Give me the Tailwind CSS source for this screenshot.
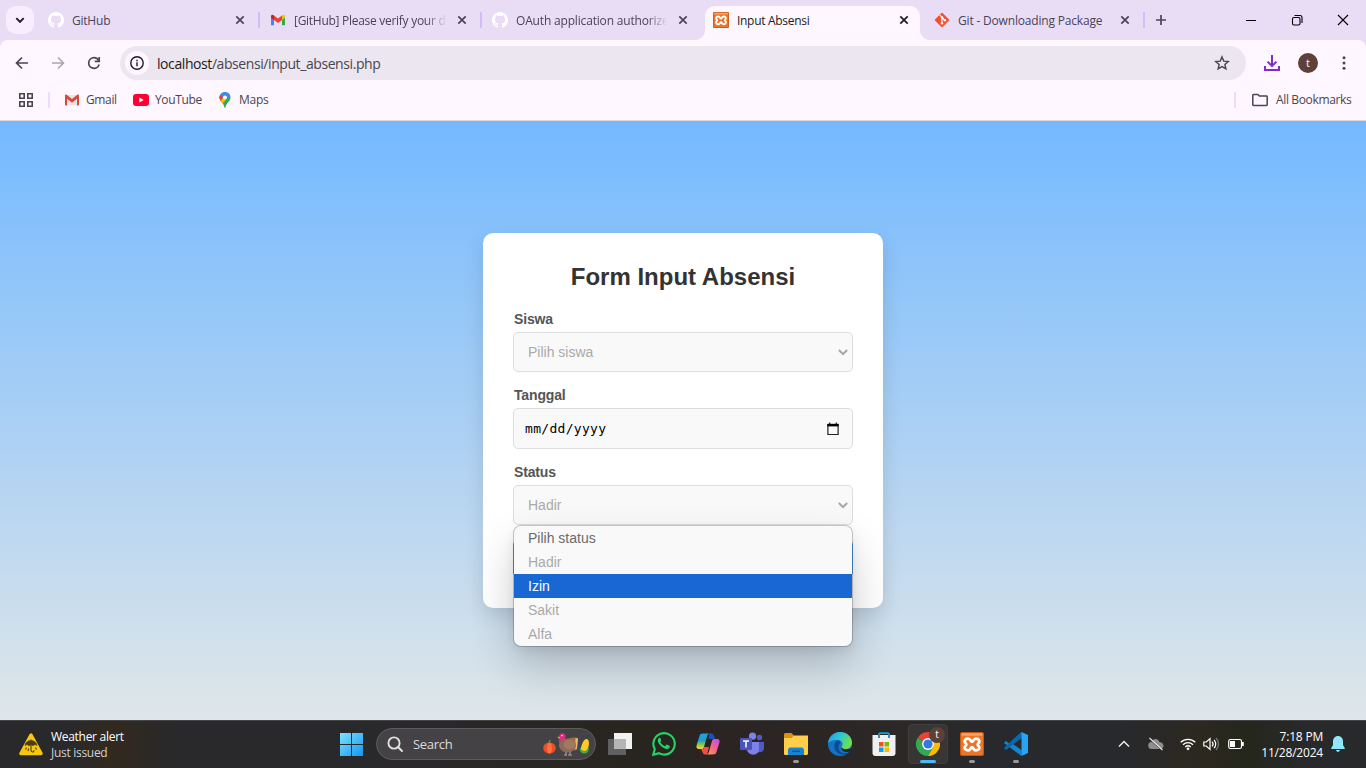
<!DOCTYPE html>
<html lang="en">
<head>
<meta charset="utf-8">
<title>Input Absensi</title>
<script src="https://cdn.jsdelivr.net/npm/@tailwindcss/browser@4"></script>
</head>
<body class="w-[1366px] h-[768px] overflow-hidden flex flex-col font-['Open_Sans',sans-serif]">
<svg class="hidden">
  <symbol id="gh" viewBox="0 0 16 16"><path fill="#fff" d="M8 0C3.58 0 0 3.58 0 8c0 3.54 2.29 6.53 5.47 7.59.4.07.55-.17.55-.38 0-.19-.01-.82-.01-1.49-2.01.37-2.53-.49-2.69-.94-.09-.23-.48-.94-.82-1.13-.28-.15-.68-.52-.01-.53.63-.01 1.08.58 1.23.82.72 1.21 1.87.87 2.33.66.07-.52.28-.87.51-1.07-1.78-.2-3.64-.89-3.64-3.95 0-.87.31-1.59.82-2.15-.08-.2-.36-1.02.08-2.12 0 0 .67-.21 2.2.82.64-.18 1.32-.27 2-.27.68 0 1.36.09 2 .27 1.53-1.04 2.2-.82 2.2-.82.44 1.1.16 1.92.08 2.12.51.56.82 1.27.82 2.15 0 3.07-1.87 3.75-3.65 3.95.29.25.54.73.54 1.48 0 1.07-.01 1.93-.01 2.2 0 .21.15.46.55.38A8.013 8.013 0 0016 8c0-4.42-3.58-8-8-8z"/></symbol>
  <symbol id="x" viewBox="0 0 16 16"><path d="M4.3 4.3l7.4 7.4M11.7 4.3l-7.4 7.4" stroke="currentColor" stroke-width="1.7" fill="none"/></symbol>
  <symbol id="xampp" viewBox="0 0 24 24"><rect width="24" height="24" rx="2" fill="#c9580f"/><rect x="1" y="1" width="22" height="22" rx="1.5" fill="#ed7527"/><rect x="1.500" y="1.200" width="21" height="2.600" rx="1" fill="#f5a26a"/><path d="M12 9.800C10.600 9.800 10.600 6.700 8.200 6.700 5.600 6.700 4.300 8.300 4.700 9.900c.3 1.200 1.600 1.300 1.600 2.600s-1.300 1.400-1.600 2.600c-.4 1.600.9 3.200 3.500 3.200 2.400 0 2.400-3.100 3.800-3.100s1.400 3.100 3.800 3.100c2.600 0 3.900-1.600 3.500-3.200-.3-1.200-1.600-1.300-1.600-2.600s1.300-1.400 1.600-2.600c.4-1.600-.9-3.200-3.500-3.200-2.400 0-2.400 3.100-3.800 3.100z" fill="none" stroke="#fff" stroke-width="2.800" stroke-linejoin="round"/></symbol>
</svg>

<!-- Tab strip -->
<header class="h-10 shrink-0 bg-[#e9ddf6] flex items-center text-[12px] text-[#4a4458] tracking-[-0.22px] [&_span]:pt-px">
  <div class="w-[38px] pl-[6px]"><div class="size-7 rounded-[10px] bg-[#f7edfe] flex items-center justify-center"><svg class="size-4" viewBox="0 0 16 16" fill="none" stroke="#1d1b20" stroke-width="1.900"><path d="M4.300 6.200L8 9.900l3.700-3.700"/></svg></div></div>
  <div class="w-[222px] h-10 flex items-center pl-[10px]">
    <svg class="size-4 mr-2"><use href="#gh"/></svg><span class="w-[149px] whitespace-nowrap">GitHub</span>
    <svg class="size-4 ml-[11px]"><use href="#x"/></svg><i class="w-[2px] h-4 bg-[#d3bcfd] ml-auto"></i>
  </div>
  <div class="w-[222px] h-10 flex items-center pl-[10px]">
    <svg class="size-4 mr-2" viewBox="0 0 16 16"><path d="M1 4v9.200h3V7.500z" fill="#4285f4"/><path d="M15 4v9.200h-3V7.500z" fill="#34a853"/><path d="M12 3.500v4.500l3-2.300V4.300c0-1.700-1.600-2.200-3-.8z" fill="#fbbc04"/><path d="M4 3.500L8 6.600l4-3.100V8l-4 3-4-3z" fill="#ea4335"/><path d="M1 4.300v1.400L4 8V3.500C2.600 2.100 1 2.700 1 4.300z" fill="#c5221f"/></svg>
    <span class="w-[151px] whitespace-nowrap tracking-[-0.280px] [mask-image:linear-gradient(to_right,#000_132px,transparent_153px)]">[GitHub] Please verify your d</span>
    <svg class="size-4 ml-[9px]"><use href="#x"/></svg><i class="w-[2px] h-4 bg-[#d3bcfd] ml-auto"></i>
  </div>
  <div class="w-[220.500px] h-10 flex items-center pl-[10px]">
    <svg class="size-4 mr-2"><use href="#gh"/></svg><span class="w-[152px] whitespace-nowrap tracking-[-0.170px] [mask-image:linear-gradient(to_right,#000_132px,transparent_151px)]">OAuth application authorize</span>
    <svg class="size-4 ml-[7px]"><use href="#x"/></svg>
  </div>
  <div class="w-[221.500px] h-10 flex items-center relative text-[#1d1b20] pl-[10.500px]">
    <div class="absolute left-[2.500px] top-[6px] w-[215px] h-[34px] rounded-t-[10px] bg-[#fef7ff]"></div>
    <div class="absolute left-[-7.500px] bottom-0 size-[10px] bg-[radial-gradient(circle_at_0_0,transparent_9.500px,#fef7ff_10.500px)]"></div>
    <div class="absolute left-[217.500px] bottom-0 size-[10px] bg-[radial-gradient(circle_at_100%_0,transparent_9.500px,#fef7ff_10.500px)]"></div>
    <svg class="size-4 mr-2 relative"><use href="#xampp"/></svg><span class="w-[149px] relative tracking-[-0.300px]">Input Absensi</span>
    <svg class="size-4 ml-[10px] relative"><use href="#x"/></svg>
  </div>
  <div class="w-[221px] h-10 flex items-center pl-[10px]">
    <svg class="size-4 mr-2" viewBox="0 0 16 16"><rect x="2.600" y="2.600" width="10.800" height="10.800" rx=".8" transform="rotate(45 8 8)" fill="#f4502f"/><path d="M5.600 2.800L8 5.200v6M8 5.500l3 3" stroke="#fff" stroke-width="1.100" fill="none"/><circle cx="8" cy="5.300" r="1.200" fill="#fff"/><circle cx="8" cy="11.300" r="1.200" fill="#fff"/><circle cx="11" cy="8.300" r="1.200" fill="#fff"/></svg>
    <span class="w-[149px] whitespace-nowrap tracking-[-0.180px]">Git - Downloading Package</span>
    <svg class="size-4 ml-[10px]"><use href="#x"/></svg><i class="w-[2px] h-4 bg-[#d3bcfd] ml-auto"></i>
  </div>
  <svg class="size-4 ml-2" viewBox="0 0 16 16" stroke="#4a4458" stroke-width="1.700"><path d="M8 3v10M3 8h10"/></svg>
  <div class="ml-auto flex items-center gap-[30px] pr-[15px] text-black">
    <svg class="size-4" viewBox="0 0 16 16" stroke="#000"><path d="M3 8.500h10"/></svg>
    <svg class="size-4" viewBox="0 0 16 16" fill="none" stroke="#000" stroke-width="1.100"><rect x="3.500" y="5.500" width="7.500" height="7.500" rx="1.500"/><path d="M5.500 3.500H11a2 2 0 012 2v5.500"/></svg>
    <svg class="size-4" viewBox="0 0 16 16" stroke="#000" stroke-width="1.100"><path d="M3 3l10 10M13 3L3 13"/></svg>
  </div>
</header>

<!-- Address bar and bookmarks -->
<div class="h-[81px] shrink-0 bg-[#e9ddf6]">
<div class="h-[81px] bg-[#fef7ff] rounded-t-[8px] border-b border-[#ded5e2]">
  <div class="flex items-center h-[46px] text-[#4a4458]">
    <svg class="size-4 ml-[14px]" viewBox="0 0 16 16" fill="none" stroke="#4a4458" stroke-width="1.700"><path d="M14 8H3M8 2.500L2.500 8 8 13.500"/></svg>
    <svg class="size-4 ml-5" viewBox="0 0 16 16" fill="none" stroke="#aaa5ae" stroke-width="1.600"><path d="M2 8h11M8 2.500L13.500 8 8 13.500"/></svg>
    <svg class="size-4 ml-5" viewBox="0 0 16 16" fill="none" stroke="#4a4458" stroke-width="1.700"><path d="M13.100 9.500A5.300 5.300 0 118 2.700c2 0 3.700 1.100 4.700 2.900"/><path d="M13.200 1.900v4.400H8.800"/></svg>
    <div class="ml-[18px] w-[1126px] h-[34px] rounded-full bg-[#ece6f0] flex items-center pl-[5px] pr-4">
      <div class="size-6 rounded-full bg-[#fef7ff] flex items-center justify-center"><svg class="size-4" viewBox="0 0 16 16" fill="none" stroke="#1d1b20" stroke-width="1.400"><circle cx="8" cy="8" r="6.200"/><path d="M8 7.200V11.300M8 4.700v1.500"/></svg></div>
      <div class="ml-2 text-[14px] tracking-[-0.420px] text-[#49454f]"><span class="text-[#1d1b20]">localhost</span>/absensi/input_absensi.php</div>
      <svg class="size-4 ml-auto" viewBox="0 0 16 16" fill="none" stroke="#49454f" stroke-width="1.400"><path d="M8 1.900l1.750 4.200 4.550.4-3.450 3 1.050 4.400L8 11.550 4.100 13.900l1.050-4.400-3.450-3 4.550-.4z"/></svg>
    </div>
    <svg class="w-4 h-4 ml-[18px]" viewBox="0 0 16 16" fill="none" stroke="#7c2dd0" stroke-width="2"><path d="M8 0v11M3.600 6.600L8 11l4.400-4.400M1 11v4h14v-4"/></svg>
    <div class="ml-[18px] size-5 rounded-full bg-[#5d4037] text-white text-[11px] leading-[19px] text-center">t</div>
    <svg class="size-4 ml-[18px]" viewBox="0 0 16 16" fill="#4a4458"><circle cx="8" cy="2.800" r="1.500"/><circle cx="8" cy="8" r="1.500"/><circle cx="8" cy="13.200" r="1.500"/></svg>
  </div>
  <div class="flex items-center h-7 text-[12px] text-[#49454f] tracking-[-0.360px]">
    <svg class="size-4 ml-[18px]" viewBox="0 0 16 16" fill="none" stroke="#49454f" stroke-width="1.600"><path d="M1.800 1.800h4.400v4.400H1.800zM9.800 1.800h4.400v4.400H9.800zM1.800 9.800h4.400v4.400H1.800zM9.800 9.800h4.400v4.400H9.800z"/></svg>
    <i class="w-[2px] h-4 bg-[#eaddff] ml-[14px]"></i>
    <svg class="size-4 ml-[14px]" viewBox="0 0 16 16"><path d="M1.500 3h13v10.500h-13z" fill="#e8e3e6"/><path d="M1 3.500v9.300c0 .4.300.7.700.7H3V6.800l5 4 5-4v6.700h1.300c.4 0 .7-.3.700-.7V3.500c0-1-1-1.300-1.700-.8L8 7 2.700 2.700C2 2.200 1 2.500 1 3.500z" fill="#d54b3d"/></svg>
    <span class="ml-[6px] w-[32px]">Gmail</span>
    <svg class="size-4 ml-[15px]" viewBox="0 0 16 16"><rect y="2" width="16" height="12" rx="3" fill="#ff0033"/><path d="M6.300 5.500v5L10.700 8z" fill="#fff"/></svg>
    <span class="ml-[6px] w-[47px]">YouTube</span>
    <svg class="size-4 ml-[15px]" viewBox="0 0 16 16"><clipPath id="pin"><path d="M8 0a5.500 5.500 0 00-5.500 5.600C2.500 9.500 6.900 11 7.400 15.300c.1.900 1.100.9 1.200 0C9.100 11 13.500 9.500 13.500 5.600A5.500 5.500 0 008 0z"/></clipPath><g clip-path="url(#pin)"><path d="M0 0h16v16H0z" fill="#34a853"/><path d="M2 9.500L14-1H2z" fill="#4285f4"/><path d="M2 2l5 4-5 5z" fill="#ea4335"/><path d="M2 10l5-5 2 3-5 5z" fill="#fbbc04"/><path d="M7 5l5-5 2 4-6 4z" fill="#4285f4"/></g><circle cx="8" cy="5.600" r="2" fill="#fff"/></svg>
    <span class="ml-[6px] tracking-[-0.250px]">Maps</span>
    <i class="w-[2px] h-4 bg-[#eaddff] ml-auto"></i>
    <svg class="w-4 h-4 ml-[16px]" viewBox="0 0 16 16" fill="none" stroke="#49454f" stroke-width="1.500"><path d="M.8 3.200c0-.5.200-.700.700-.7h4.300l1.600 1.600h7.100c.5 0 .7.200.7.700v8c0 .5-.2.700-.7.700h-13c-.5 0-.7-.2-.7-.7z"/></svg>
    <span class="ml-2 w-[76px] mr-[14px] whitespace-nowrap">All Bookmarks</span>
  </div>
</div>
</div>

<!-- Attendance form -->
<main class="h-[599px] shrink-0 bg-linear-to-b/srgb from-[#74b9ff] to-[#dfe6e9] flex justify-center font-['Liberation_Sans',Arial,sans-serif]">
  <form class="mt-[112px] w-[400px] h-[375px] rounded-[10px] bg-white px-[30px] pt-[30px] shadow-[0_8px_20px_rgba(0,0,0,0.12)] text-[14px]">
    <h2 class="text-[24px] leading-[28px] font-bold text-[#333] text-center">Form Input Absensi</h2>
    <label class="block mt-5 leading-4 font-bold text-[#555] pl-px tracking-[-0.150px]">Siswa</label>
    <div class="mt-[5px] h-10 rounded-[5px] border border-[#ddd] bg-[#f9f9f9] flex items-center justify-between pl-[14px] pr-[3px] text-[#aaa]">Pilih siswa
      <svg class="w-3 h-3" viewBox="0 0 12 12" fill="none" stroke="#a8a8a8" stroke-width="2"><path d="M1.800 4L6 8l4.200-4"/></svg></div>
    <label class="block mt-[15px] leading-4 font-bold text-[#555] pl-px tracking-[-0.150px]">Tanggal</label>
    <div class="mt-[5px] h-[41px] rounded-[5px] border border-[#ddd] bg-[#f9f9f9] flex items-center justify-between pl-[11px] pr-3 text-black"><span class="font-['DejaVu_Sans_Mono',monospace] text-[13px] tracking-[0.300px]">mm/dd/yyyy</span>
      <svg class="w-[14px] h-[14px]" viewBox="0 0 14 14"><path d="M3.700 .5v2M10.300 .5v2" stroke="#222" stroke-width="1.200"/><path d="M1.900 2.500h10.200v10H1.900z" fill="none" stroke="#222" stroke-width="1.200"/><path d="M1.400 1.800h11.200v2.600H1.400z"/></svg></div>
    <label class="block mt-[15px] leading-4 font-bold text-[#555] pl-px tracking-[-0.150px]">Status</label>
    <div class="relative">
      <div class="mt-[5px] h-10 rounded-[5px] border border-[#ddd] bg-[#f9f9f9] flex items-center justify-between pl-[14px] pr-[3px] text-[#aaa]">Hadir
        <svg class="w-3 h-3" viewBox="0 0 12 12" fill="none" stroke="#a8a8a8" stroke-width="2"><path d="M1.800 4L6 8l4.200-4"/></svg></div>
      <div class="mt-[15px] h-[37px] rounded-[5px] bg-[#50a5f5]"></div>
      <div class="absolute left-px top-[41px] w-[338px] h-[120px] rounded-[7px] bg-[#f9f9f9] overflow-hidden leading-6 text-[#aaa] shadow-[0_0_0_1px_rgba(0,0,0,0.2),0_20px_44px_rgba(0,0,0,0.2),0_4px_12px_rgba(0,0,0,0.08)] *:pl-[14px]">
        <div class="text-[#6b6b6b]">Pilih status</div>
        <div>Hadir</div>
        <div class="bg-[#1967d2] text-white">Izin</div>
        <div>Sakit</div>
        <div>Alfa</div>
      </div>
    </div>
  </form>
</main>

<!-- Taskbar -->
<footer class="h-12 shrink-0 shadow-[inset_0_1px_0_#454547] bg-[linear-gradient(to_right,#29292c_0,#29292c_70px,#33291e_110px,#2d2924_145px,#29292c_180px,#29292b_380px,#28251f_640px,#2b2423_740px,#2b2826_900px,#28292e_1000px,#28292d_1120px,#2c281f_1200px,#25271c_1245px,#28292b_1310px,#28292b_1366px)] flex items-center text-white text-[12px] tracking-[-0.290px]">
  <svg class="w-6 h-[23px] ml-[19px]" viewBox="0 0 24 23"><path d="M12 2.200L2 20.500h20z" fill="#f6c90e" stroke="#f6c90e" stroke-width="3.500" stroke-linejoin="round"/><path d="M6 12.500a6 5 0 0112 0l-2-1-2 1.200-2-1-2 1-2-1.200z" fill="#4c3c12" stroke="#4c3c12" stroke-width=".6"/><path d="M12 6.500v10.500c0 2.600 3 2.600 3 .3M7.500 14.500l-1 2M9.800 15.500l-1 2.500M16.500 14.500l1 2" stroke="#4c3c12" stroke-width="1.100" fill="none"/></svg>
  <div class="ml-2 w-[281px] leading-4 pt-px"><div>Weather alert</div><div class="text-[#d0d0d0]">Just issued</div></div>
  <svg class="w-6 h-6 ml-2" viewBox="0 0 24 24"><defs><linearGradient id="win" x1="0" y1="0" x2="24" y2="24" gradientUnits="userSpaceOnUse"><stop stop-color="#7ce5ff"/><stop offset="1" stop-color="#1593f0"/></linearGradient></defs><path fill="url(#win)" d="M0 1h11v11H0zM12 1h11v11H12zM0 13h11v11H0zM12 13h11v11H12z"/></svg>
  <div class="ml-3 w-[220px] h-8 rounded-full border border-[#5d5b5e] bg-[#454246] flex items-center pl-[10px] pr-[5px] text-[#dcdcdc]">
    <svg class="size-4" viewBox="0 0 16 16" fill="none" stroke="#e0e0e0" stroke-width="1.900"><circle cx="7" cy="7" r="5.600"/><path d="M11 11l4 4" stroke-linecap="round"/></svg>
    <span class="ml-[10px] text-[13px] pt-px">Search</span>
    <svg class="w-[48px] h-6 ml-auto" viewBox="0 0 48 24"><ellipse cx="7.500" cy="16" rx="6.300" ry="5.500" fill="#ee4d28"/><ellipse cx="7.500" cy="16" rx="2.500" ry="5.500" fill="#ff7042"/><path d="M7 11l1-3" stroke="#70872e" stroke-width="1.500"/><path d="M24 8c4-3 9-3 12-2l-1 12-12 1z" fill="#a56a3f"/><path d="M33.500 6l2.500 .5-1 10-2 1z" fill="#e6b67a"/><path d="M17 5c0-4.500 6-5 6.500-1 .3 2-1.500 4-1.500 6l-2 4c-4-2-3-7-3-9z" fill="#df2b80"/><circle cx="20" cy="3.500" r=".8" fill="#fff"/><path d="M15.500 4.500l3 1-2 1z" fill="#ffb02e"/><ellipse cx="25.500" cy="13.500" rx="8.500" ry="7" fill="#8c695b"/><ellipse cx="27.500" cy="12.500" rx="6" ry="5" fill="#a1795f"/><path d="M24 20v3M28 20v3M22 23h3M26 23h4" stroke="#b5a5a5"/><path d="M39 20c-1-6 3-14 6-13s2.500 8-1 13z" fill="#ffc928"/><path d="M38 15c1 3 3 4 4.500 4s3.500-2 4.500-4c0 5-2 6.500-4.500 6.500-3.500 0-5.500-2.500-4.500-6.500z" fill="#3fae45"/></svg>
  </div>
  <div class="flex items-center h-10 *:w-11 *:h-10 *:flex *:items-center *:justify-center *:relative ml-[2px]">
    <div><svg class="size-6" viewBox="0 0 24 24"><path d="M6 1h18v16H6z" fill="#f1f1f1"/><path d="M0 7h18v16H0z" fill="#606060"/><path d="M6 7h12v10H6z" fill="#b5b5b5"/></svg></div>
    <div><svg class="size-6" viewBox="0 0 24 24"><path d="M1.200 22.800l1.600-5.600A10.700 10.700 0 1112.200 22.600a10.700 10.700 0 01-5.200-1.400z" fill="none" stroke="#25d366" stroke-width="2.100"/><path fill="#25d366" d="M8.500 6.300c-.4-.9-1.300-.7-1.900-.1-1.400 1.500-.9 3.600.2 5.300 1.700 2.600 4 4.600 7.100 5.400 1.900.5 3.900-.6 4-2.300.1-.6-.2-.7-.6-.9l-2-1c-.5-.2-.8-.2-1.100.2l-.8 1c-.3.300-.6.300-1 .1-1.700-.8-3-2-3.900-3.500-.2-.4-.1-.6.100-.9.800-1 .8-1.100.5-1.700z"/></svg></div>
    <div><svg class="size-6" viewBox="0 0 24 24"><defs><linearGradient id="cpa" x1="0" y1="0" x2="0" y2="1"><stop stop-color="#19a4ef"/><stop offset=".45" stop-color="#229fc3"/><stop offset=".75" stop-color="#9ec93b"/><stop offset="1" stop-color="#ffd63c"/></linearGradient><linearGradient id="cpb" x1="1" y1="0" x2="0" y2="1"><stop stop-color="#b44ff0"/><stop offset=".45" stop-color="#f45f92"/><stop offset="1" stop-color="#ff9b4a"/></linearGradient></defs><path d="M13 1.500h2.500c1.500 0 2 1 2.500 2.500l1 3h-6z" fill="#184fc7"/><path d="M7 1.500h7c-2 0-2.600 1.500-3 3L8 15c-.5 1.500-1 2-3 2H3c-2.500 0-3-2-2.300-4L3.500 4C4 2.300 5 1.500 7 1.500z" fill="url(#cpa)"/><path d="M5 17c2 0 2.500-.5 3-2h5l-2 7.500H9c-1.500 0-2-.8-2.500-2.500z" fill="#f04e48"/><path d="M17 22.500h-7c2 0 2.600-1.500 3-3L16 9c.5-1.500 1-2 3-2h2c2.500 0 3 2 2.300 4L20.500 20c-.5 1.700-1.500 2.500-3.500 2.500z" fill="url(#cpb)"/></svg></div>
    <div><svg class="size-6" viewBox="0 0 24 24"><circle cx="19.500" cy="5.500" r="2.700" fill="#5059c9"/><path d="M16 10h8v6c0 5-6 5-8 3z" fill="#5059c9"/><circle cx="12.500" cy="4.200" r="3.600" fill="#7b83eb"/><path d="M7 10h12v7c0 8-12 7-12 0z" fill="#7b83eb"/><rect y="6" width="12" height="12" rx="1" fill="#4b53bc"/><path d="M3 9h6M6 9v6.500" stroke="#fff" stroke-width="1.500"/></svg></div>
    <div><svg class="size-6" viewBox="0 0 24 24"><path d="M0 2.500C0 1.700.7 1 1.500 1h6L10 3.500v4H0z" fill="#d99312"/><path d="M0 6h7.500L10 3.500h14v18c0 .8-.5 1.500-1.500 1.500h-21C.7 23 0 22.500 0 21.500z" fill="#ffce4b"/><path d="M4 23v-5c0-1.500 1-2.500 2.500-2.500h11c1.500 0 2.500 1 2.500 2.500v5z" fill="#1683d3"/><path d="M8 18.500h8V20H8z" fill="#0c5ba5"/></svg><i class="absolute bottom-px left-[19px] w-[6px] h-[3px] rounded-full bg-[#9b9998]"></i></div>
    <div><svg class="size-6" viewBox="0 0 24 24"><defs><linearGradient id="ea" x1="0" y1="0" x2="1" y2=".4"><stop stop-color="#1b9de2"/><stop offset=".5" stop-color="#2cc3da"/><stop offset="1" stop-color="#6ee04a"/></linearGradient></defs><circle cx="12" cy="12" r="12" fill="#1474c4"/><path d="M0 11.500C.5 5 5.500 0 12 0c7 0 12 5 12 10.500 0 4-3 6.500-6.500 6.500-3 0-4.500-1.500-3.500-3 1.500-2.500 0-6-5-6-4.500 0-8 1.500-9 3.500z" fill="url(#ea)"/><path d="M9 8.500c-4 3-3 9 0 11.800 3 2.800 8 3.200 11 .1-5 2-9.500-.9-9.500-5 0-2 .9-3.300 1.500-4 1-1 .5-3-3-2.900z" fill="#0d4b92"/><path d="M13.500 15.500c1.500 2.500 6.500 2.500 10 .5l1 2.500-4.500 1.500c-4 0-7-1.500-6.500-4.500z" fill="#2b2725"/></svg></div>
    <div><svg class="size-6" viewBox="0 0 24 24"><path d="M7 6V2.500C7 1.700 7.500 1.200 8.300 1.200h7.400c.8 0 1.300.5 1.300 1.300V6" fill="none" stroke="#1a9bdd" stroke-width="1.800"/><path d="M.5 3h23v18a3 3 0 01-3 3h-17a3 3 0 01-3-3z" fill="#f0f0f0"/><path d="M7 6V3M17 6V3" stroke="#1583c9" stroke-width="1.800"/><path d="M7 10h4.500v4.500H7z" fill="#f25022"/><path d="M12.500 10H17v4.500h-4.500z" fill="#7fba00"/><path d="M7 15.500h4.500V20H7z" fill="#00a4ef"/><path d="M12.500 15.500H17V20h-4.500z" fill="#ffb900"/></svg></div>
    <div class="px-[2px]"><div class="w-10 h-10 relative flex items-center justify-center rounded-[4px] bg-[#373634] border border-[#403e3d]"><svg class="size-6" viewBox="0 0 24 24"><path d="M12 12L1.600 6A12 12 0 0122.400 6z" fill="#ea4335"/><path d="M12 12L1.600 6A12 12 0 0012 24l5.200-9z" fill="#34a853"/><path d="M12 12l10.400-6A12 12 0 0112 24l5.200-9z" fill="#fbbc04"/><circle cx="12" cy="12" r="5.900" fill="#fff"/><circle cx="12" cy="12" r="4.600" fill="#3478e8"/></svg><b class="absolute right-[2px] top-[2px] size-4 rounded-full bg-[#5d4037] text-[10px] leading-[15px] text-center font-normal">t</b><i class="absolute bottom-0 left-[11px] w-4 h-[3px] rounded-full bg-[#4cb8f4]"></i></div></div>
    <div><svg class="size-6"><use href="#xampp"/></svg><i class="absolute bottom-px left-[19px] w-[6px] h-[3px] rounded-full bg-[#9b9998]"></i></div>
    <div><svg class="size-6" viewBox="0 0 24 24"><path d="M17.500 0L5 11.500 2 9 .3 10.200v1L17.500 24v-6L9 12l8.500-6z" fill="#1684cf"/><path d="M17.500 6L2 18 .3 16.500v-1L17.500 0z" fill="#0869af"/><path d="M17.500 0L24 3v18l-6.500 3z" fill="#27a5f2"/></svg><i class="absolute bottom-px left-[19px] w-[6px] h-[3px] rounded-full bg-[#9b9998]"></i></div>
  </div>
  <div class="ml-auto flex items-center pr-[21px]">
    <svg class="w-3 h-3" viewBox="0 0 12 12" fill="none" stroke="#eee" stroke-width="1.500"><path d="M1 8.500L6 3.500l5 5"/></svg>
    <svg class="w-4 h-4 ml-[18px]" viewBox="0 0 16 16"><path d="M4 13a3.500 3.500 0 01-.5-7C4.500 2.500 10 1.500 11.500 6c5 .2 5.500 7 .5 7z" fill="#8d8d8d"/><path d="M1.500 3l13 12" stroke="#29292c" stroke-width="1"/><path d="M1.500 2l13 12" stroke="#e8e8e8" stroke-width="1.100"/></svg>
    <svg class="w-4 h-4 ml-4" viewBox="0 0 16 16" fill="none" stroke="#fff" stroke-width="1.300"><path d="M.7 6.300a10.400 10.400 0 0114.600 0M3 8.700a7.200 7.200 0 0110 0M5.300 11a4 4 0 015.400 0"/><circle cx="8" cy="12.800" r="1" fill="#fff" stroke-width=".8"/></svg>
    <svg class="w-4 h-4 ml-[7px]" viewBox="0 0 16 16" fill="none" stroke="#fff" stroke-width="1.200"><path d="M.8 6h2.500L7 2.600v10.800L3.300 10H.8zM9 5.600a3.500 3.500 0 010 4.800M11 3.800a6 6 0 010 8.400"/><path d="M13 2a8.500 8.500 0 010 12" stroke="#777"/></svg>
    <svg class="w-4 h-4 ml-[9px]" viewBox="0 0 16 16"><rect x=".7" y="3.500" width="12.800" height="9" rx="1.800" fill="none" stroke="#fff" stroke-width="1.200"/><rect x="2" y="5" width="5" height="6" fill="#fff"/><path d="M14 6h1.800v4H14z" fill="#fff"/></svg>
    <div class="ml-[17px] w-[62px] leading-4 pt-px flex flex-col items-end whitespace-nowrap tracking-[-0.200px]"><div>7:18 PM</div><div>11/28/2024</div></div>
    <svg class="w-[14px] h-4 ml-[8px]" viewBox="0 0 14 16" fill="#90e6ff"><path d="M7 0a5 5 0 00-5 5v4L.3 12c-.2.600 0 1 .5 1h12.400c.5 0 .7-.4.5-1L12 9V5a5 5 0 00-5-5zM5 14h4c-.4 2.400-3.600 2.400-4 0z"/></svg>
  </div>
</footer>
</body>
</html>
